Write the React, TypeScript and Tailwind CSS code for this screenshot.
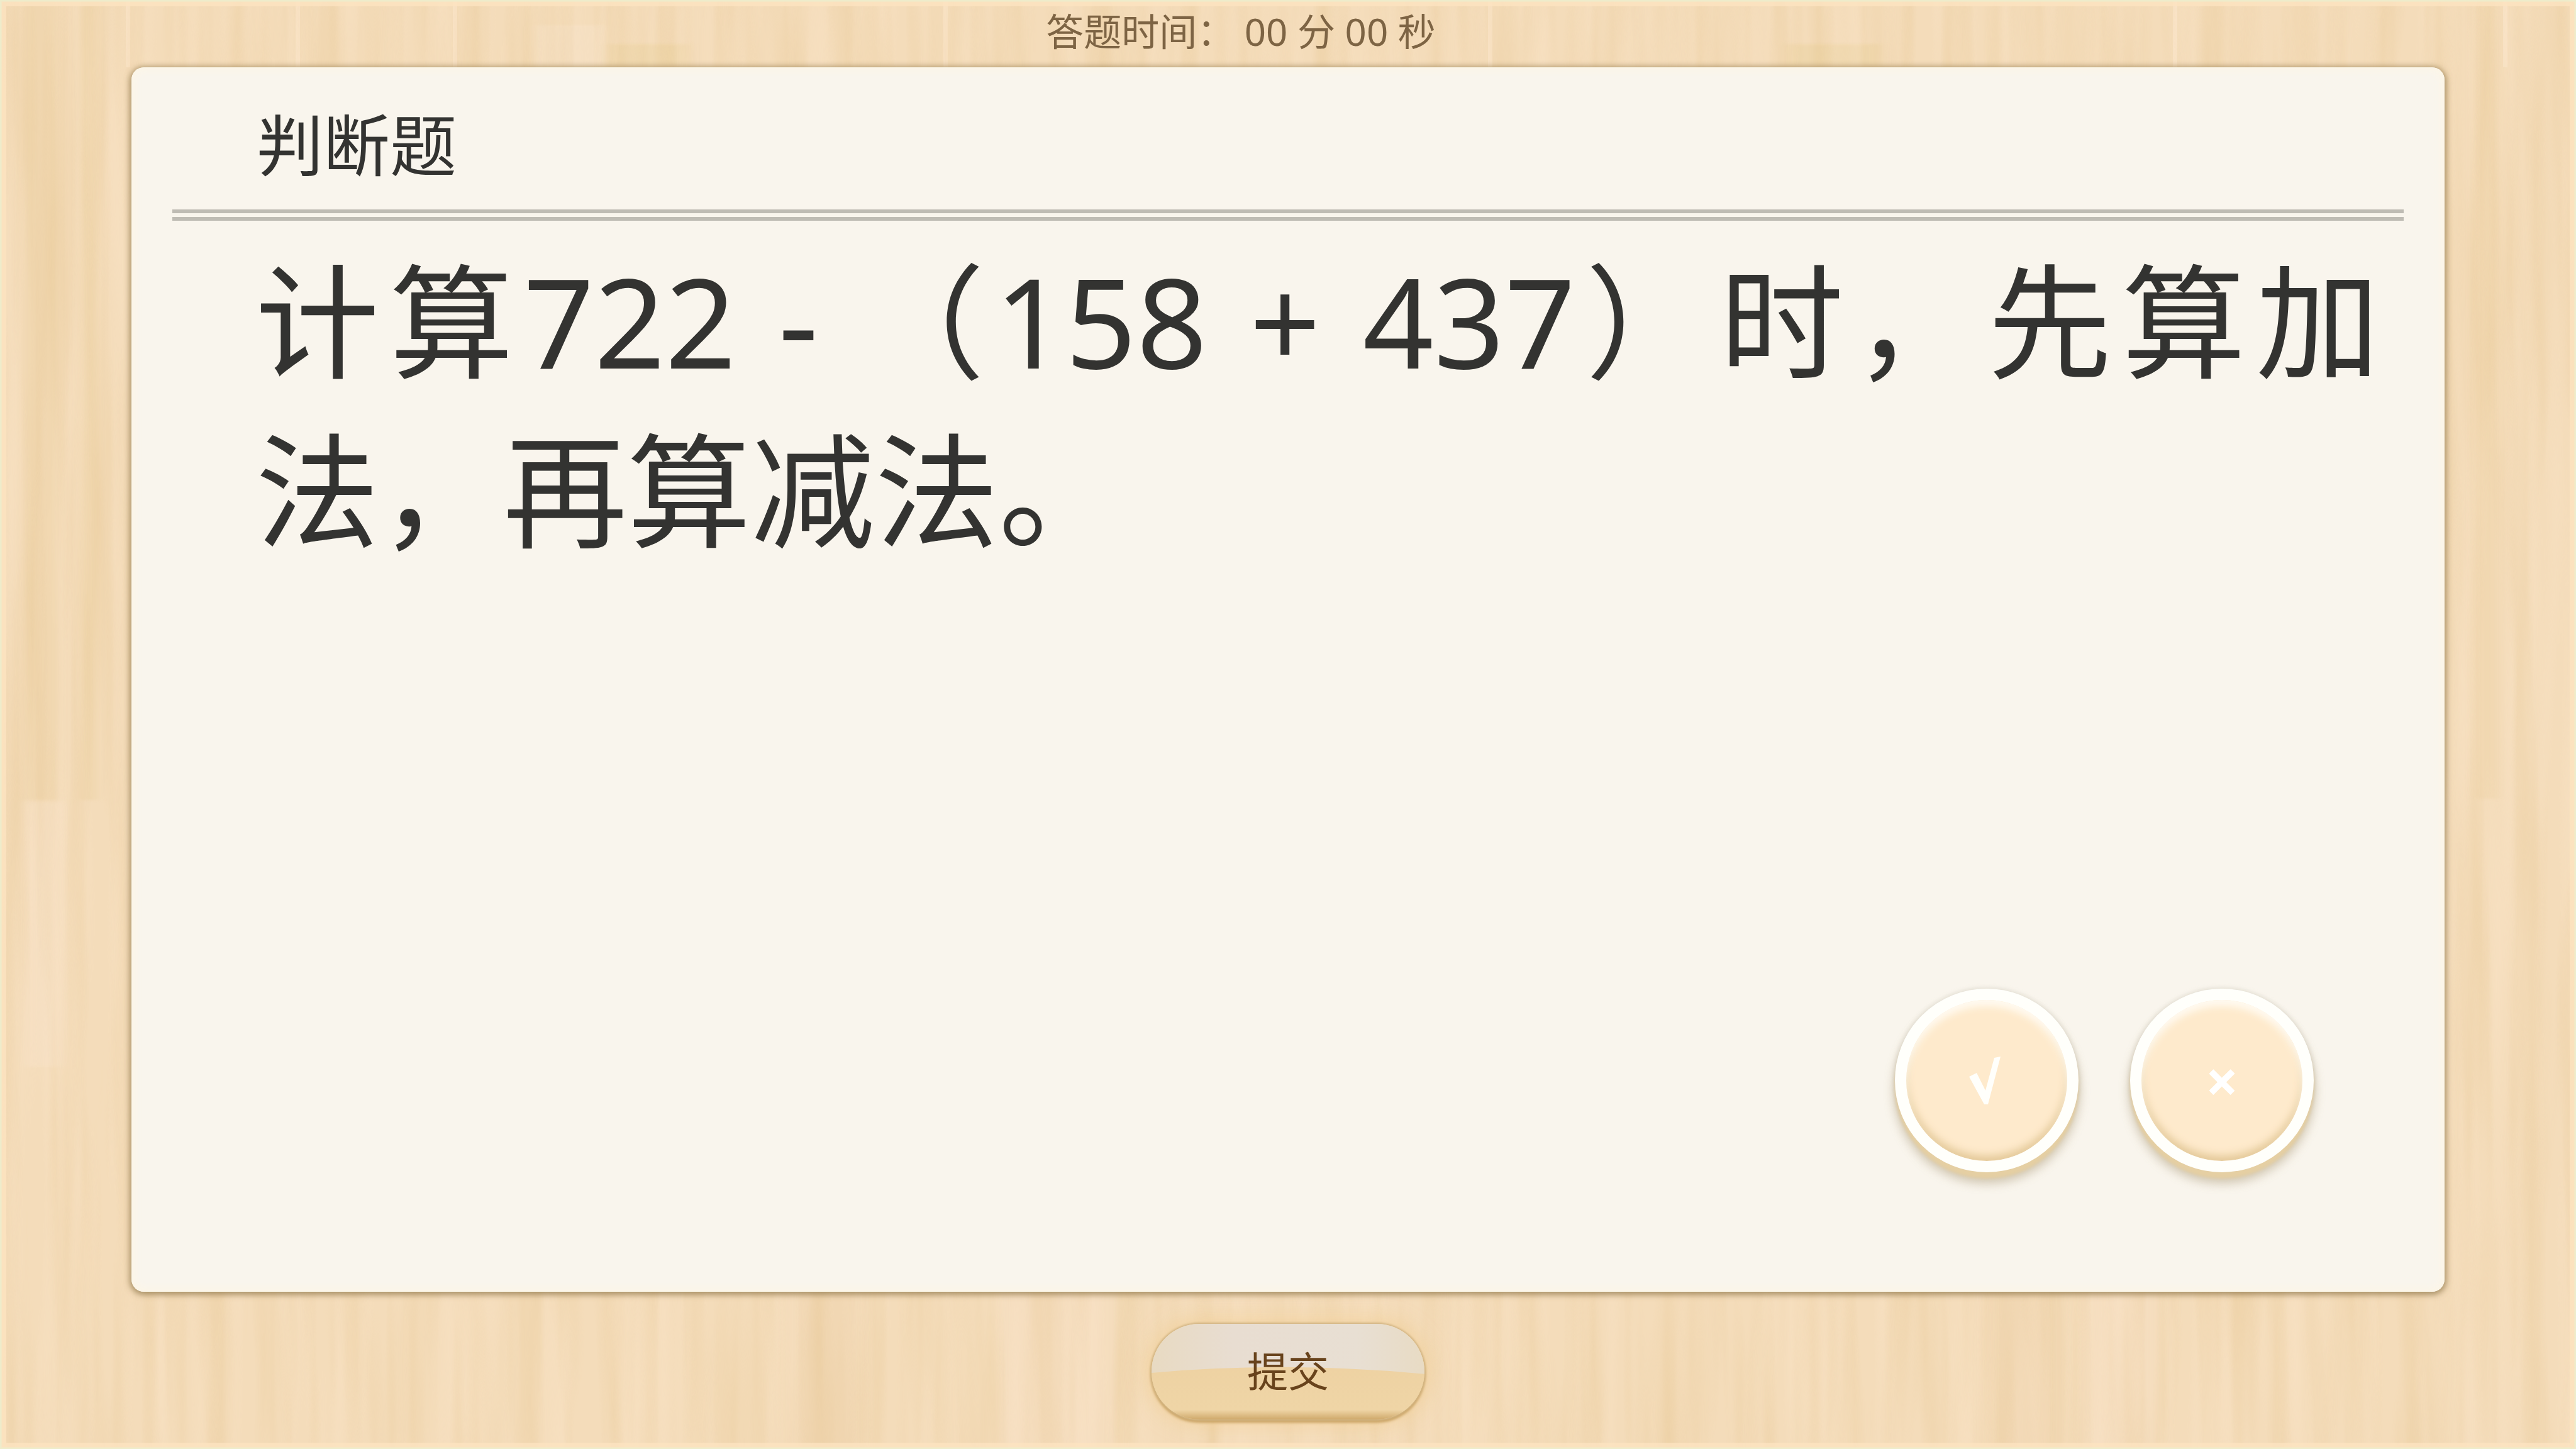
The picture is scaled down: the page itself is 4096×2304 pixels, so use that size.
import React from "react";

const PLANKS: [number, number, number, number, string][] = [
  [38, 0, 55, 1272, "#edd2a6"],
  [128, 0, 26, 1272, "#ecd1a3"],
  [40, 1276, 60, 420, "#f7e1c6"],
  [850, 40, 110, 67, "#f7e3c9"],
  [965, 70, 130, 37, "#ecd3a2"],
  [1250, 2054, 130, 250, "#efd4ad"],
  [1590, 2054, 180, 250, "#f6dfc3"],
  [2840, 70, 150, 37, "#ecd3a2"],
  [3160, 2054, 120, 250, "#efd4ad"],
  [3310, 2054, 120, 250, "#f6dfc3"],
  [3938, 0, 34, 1270, "#eed3a8"],
];

const SEAMS = [200, 470, 720, 1500, 2366, 3455, 3980];

function WoodBackground() {
  return (
    <svg
      aria-hidden="true"
      className="absolute inset-0 h-full w-full"
      viewBox="0 0 4096 2304"
      preserveAspectRatio="none"
    >
      <defs>
        <filter id="grain" x="0" y="0" width="100%" height="100%" colorInterpolationFilters="sRGB">
          <feTurbulence type="fractalNoise" baseFrequency="0.022 0.0014" numOctaves="3" seed="7" />
          <feColorMatrix values="0 0 0 0 0.86  0 0 0 0 0.71  0 0 0 0 0.45  1.5 0 0 0 -0.6" />
        </filter>
        <filter id="shine" x="0" y="0" width="100%" height="100%" colorInterpolationFilters="sRGB">
          <feTurbulence type="fractalNoise" baseFrequency="0.028 0.0016" numOctaves="2" seed="23" />
          <feColorMatrix values="0 0 0 0 1  0 0 0 0 0.92  0 0 0 0 0.83  2 0 0 0 -0.9" />
        </filter>
        <filter id="soft" x="-20%" y="-20%" width="140%" height="140%">
          <feGaussianBlur stdDeviation="8 2" />
        </filter>
      </defs>
      <rect width="4096" height="2304" fill="#f4dcba" />
      <g filter="url(#soft)" opacity="0.5">
        {PLANKS.map(([x, y, w, h, c]) => (
          <rect key={`${x}-${y}`} x={x} y={y} width={w} height={h} fill={c} />
        ))}
      </g>
      {SEAMS.map((x) => (
        <rect key={x} x={x} y="0" width="7" height="107" fill="#fbe8cf" opacity="0.6" />
      ))}
      <rect width="4096" height="2304" filter="url(#grain)" opacity="0.32" />
      <rect width="4096" height="2304" filter="url(#shine)" opacity="0.3" />
      <rect x="5" y="5" width="4086" height="2294" fill="none" stroke="#fde4c0" strokeWidth="10" opacity="0.8" />
      <rect x="1" y="1" width="4094" height="2302" fill="none" stroke="#eeeccb" strokeWidth="3" />
    </svg>
  );
}

function JudgeButton({ label, children }: { label: string; children: React.ReactNode }) {
  return (
    <button
      type="button"
      aria-label={label}
      className="flex size-[292px] items-center justify-center rounded-full border-[18px] border-[#fffffb] bg-[#feeacc] font-bold text-white shadow-[0_10px_4px_#e5cfa3,0_16px_16px_2px_rgba(150,130,90,0.4),0_0_6px_2px_rgba(200,195,180,0.4),inset_0_10px_12px_#fffaf0,inset_0_-8px_14px_#e3c897]"
    >
      {children}
    </button>
  );
}

export default function App() {
  return (
    <main
      lang="zh-CN"
      className="relative flex h-screen w-full flex-col overflow-hidden bg-[#f4dcba] font-['Noto_Sans','Noto_Sans_CJK_SC',sans-serif]"
    >
      <WoodBackground />

      <header className="relative flex h-[107px] shrink-0 items-start justify-center pt-1 pr-[150px] text-[60px] leading-[92px] text-[#7d6444]">
        <p className="whitespace-pre">答题时间： 00 分 00 秒</p>
      </header>

      <section className="relative mx-[209px] flex min-h-0 flex-1 flex-col rounded-[20px] bg-[#f9f5ed] px-[65px] shadow-[0_2px_10px_3px_rgba(140,115,70,0.7),inset_0_0_14px_4px_#fdf6e6]">
        <h1 className="border-b-[18px] border-double border-[#bfbcb4] pt-[48px] pb-[28px] pl-[134px] text-[106px] leading-[150px] text-[#333331]">
          判断题
        </h1>
        <p className="pt-[24px] pr-[38px] pl-[132px] text-justify text-[197px] leading-[269px] text-[#333331]">
          计算722 - （158 + 437）时，先算加法，再算减法。
        </p>
        <div className="mt-auto flex justify-end gap-[82px] pr-[143px] pb-[190px]">
          <JudgeButton label="正确">
            <svg aria-hidden="true" viewBox="0 0 56 76" className="mr-2 h-[76px] w-[56px]">
              <path d="M4 32L16 26L30 54L44 2L54 0L34 76H28Z" fill="#fffffb" />
            </svg>
          </JudgeButton>
          <JudgeButton label="错误">
            <span className="text-[92px]">×</span>
          </JudgeButton>
        </div>
      </section>

      <footer className="relative flex h-[250px] shrink-0 items-start justify-center pt-[51px]">
        <button
          type="button"
          className="relative h-[152px] w-[434px] overflow-hidden rounded-full bg-[#edd1a0] text-[65px] text-[#68431c] shadow-[0_0_3px_2px_#d3b685,0_4px_4px_1px_#c79f5e,0_0_30px_8px_rgba(240,205,145,0.6)]"
        >
          <svg aria-hidden="true" className="absolute inset-0 h-full w-full" viewBox="0 0 440 160" preserveAspectRatio="none">
            <defs>
              <linearGradient id="base" x1="0" y1="0" x2="0" y2="1">
                <stop offset="0" stopColor="#edcf9f" />
                <stop offset="0.9" stopColor="#efd5a6" />
                <stop offset="1" stopColor="#cfa96b" />
              </linearGradient>
              <linearGradient id="gloss" x1="0" y1="0" x2="1" y2="0">
                <stop offset="0" stopColor="#e8dac2" />
                <stop offset="0.3" stopColor="#e8ddd1" />
                <stop offset="0.75" stopColor="#e8dfd3" />
                <stop offset="1" stopColor="#e8dbc4" />
              </linearGradient>
            </defs>
            <rect width="440" height="160" fill="url(#base)" />
            <path d="M0 0H440V84Q220 62 0 82Z" fill="url(#gloss)" />
          </svg>
          <span className="relative">提交</span>
        </button>
      </footer>
    </main>
  );
}
